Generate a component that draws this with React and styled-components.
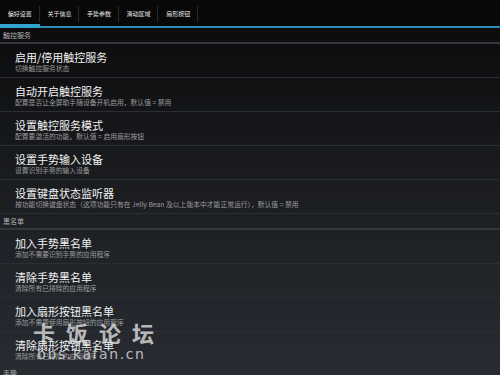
import React from 'react';
import styled, { createGlobalStyle } from 'styled-components';

const Global = createGlobalStyle`
  html, body {
    margin: 0;
    padding: 0;
    background: #0a0a0a;
  }
  body {
    font-family: "Noto Sans CJK SC", "Noto Sans", sans-serif;
  }
`;

const Screen = styled.div`
  position: relative;
  width: 500px;
  height: 375px;
  overflow: hidden;
  background: linear-gradient(to bottom, #0a0a0a 0px, #0c0c0d 30px, #1b1d21 190px, #282c32 375px);
`;

const TabBar = styled.div`
  display: flex;
  height: 26px;
  background: #080808;
  border-bottom: 2px solid #2f8db3;
`;

const Tab = styled.div`
  position: relative;
  box-sizing: border-box;
  width: 39.6px;
  height: 28px;
  margin-bottom: -2px;
  display: flex;
  align-items: center;
  justify-content: center;
  padding-bottom: 1px;
  font-size: 6px;
  color: #e6e6e6;
  border-bottom: ${({active}) => active ? '4px solid #32a3cf' : 'none'};
  padding-top: ${({active}) => active ? '3px' : '0'};

  &::after {
    content: '';
    position: absolute;
    right: 0;
    top: 6px;
    height: 16px;
    width: 1px;
    background: #2a2a2a;
  }
`;

const Header = styled.div`
  box-sizing: border-box;
  height: 16px;
  padding-left: 3px;
  display: flex;
  align-items: center;
  font-size: 7px;
  color: #b4b4b4;
  border-bottom: 2px solid #34373c;
`;

const Item = styled.div`
  box-sizing: border-box;
  height: 34px;
  padding: 7px 0 0 15px;
  border-bottom: 1px solid #2b2e33;
`;

const Title = styled.div`
  font-size: 11px;
  line-height: 12px;
  color: #f2f2f2;
`;

const Sub = styled.div`
  margin-top: 1px;
  font-size: 6.8px;
  line-height: 9px;
  color: #9c9c9c;
  white-space: nowrap;
`;

const Watermark = styled.div`
  position: absolute;
  left: 33px;
  top: 318px;
  color: rgba(225, 225, 225, 0.8);
  pointer-events: none;
`;

const MarkTitle = styled.div`
  font-size: 22px;
  line-height: 28px;
  letter-spacing: 11px;
  font-weight: bold;
`;

const MarkUrl = styled.div`
  font-family: "DejaVu Sans", sans-serif;
  font-size: 14px;
  line-height: 16px;
  letter-spacing: 1.6px;
  padding-left: 4px;
`;

const tabs = ['偏好设置', '关于信息', '手势参数', '滑动区域', '扇形按钮'];

const sections = [
  {
    name: '触控服务',
    items: [
      ['启用/停用触控服务', '切换触控服务状态'],
      ['自动开启触控服务', '配置是否让全屏助手随设备开机启用，默认值 = 禁用'],
      ['设置触控服务模式', '配置要激活的功能，默认值 = 启用扇形按钮'],
      ['设置手势输入设备', '设置识别手势的输入设备'],
      ['设置键盘状态监听器', '按功能切换键盘状态（这项功能只有在 Jelly Bean 及以上版本中才能正常运行），默认值 = 禁用'],
    ],
  },
  {
    name: '黑名单',
    items: [
      ['加入手势黑名单', '添加不需要识别手势的应用程序'],
      ['清除手势黑名单', '清除所有已排除的应用程序'],
      ['加入扇形按钮黑名单', '添加不需要使用扇形按钮的应用程序'],
      ['清除扇形按钮黑名单', '清除所有已排除的应用程序'],
    ],
  },
  { name: '手势', items: [] },
];

export default function App() {
  return (
    <Screen>
      <Global />
      <TabBar>
        {tabs.map((t, i) => (
          <Tab key={t} active={i === 0}>{t}</Tab>
        ))}
      </TabBar>
      {sections.map(s => (
        <React.Fragment key={s.name}>
          <Header>{s.name}</Header>
          {s.items.map(([title, sub]) => (
            <Item key={title}>
              <Title>{title}</Title>
              <Sub>{sub}</Sub>
            </Item>
          ))}
        </React.Fragment>
      ))}
      <Watermark>
        <MarkTitle>卡饭论坛</MarkTitle>
        <MarkUrl>bbs.kafan.cn</MarkUrl>
      </Watermark>
    </Screen>
  );
}
